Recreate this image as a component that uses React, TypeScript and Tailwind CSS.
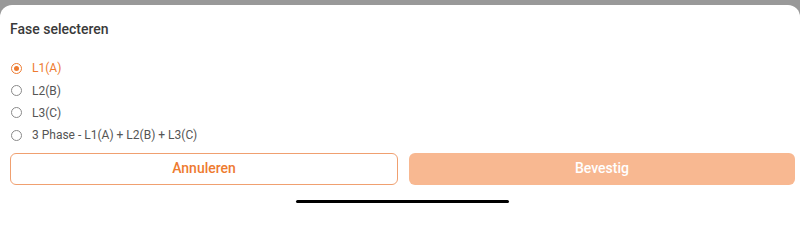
import { useState } from "react";

const phases = ["L1(A)", "L2(B)", "L3(C)", "3 Phase - L1(A) + L2(B) + L3(C)"];

function Radio({ checked }: { checked: boolean }) {
  return (
    <span
      className={`flex h-[11px] w-[11px] items-center justify-center rounded-full border ${
        checked ? "border-[#ee7b30]" : "border-[#8a8a8a]"
      }`}
    >
      {checked && <span className="h-[5px] w-[5px] rounded-full bg-[#ee7b30]" />}
    </span>
  );
}

export default function App() {
  const [selected, setSelected] = useState(0);

  return (
    <div className="flex h-[209px] w-full flex-col overflow-hidden bg-[#999999] font-['Roboto',sans-serif]">
      <div className="h-[5px] shrink-0" />
      <div className="flex flex-1 flex-col rounded-t-[12px] bg-white pr-[5px] pl-[10px]">
        <h1 className="pt-[14px] text-[14px] leading-[20px] font-medium text-[#3a3a3a]">Fase selecteren</h1>

        <div className="mt-[18px] flex flex-col">
          {phases.map((p, i) => (
            <button
              key={p}
              onClick={() => setSelected(i)}
              className="flex h-[22.4px] items-center gap-[10px] pl-[1px] text-left"
            >
              <Radio checked={selected === i} />
              <span className={`text-[12px] ${selected === i ? "text-[#ee7b30]" : "text-[#555555]"}`}>{p}</span>
            </button>
          ))}
        </div>

        <div className="mt-[6px] flex gap-[11px]">
          <button className="h-[32px] flex-1 rounded-[6px] border border-[#f0a070] text-[14px] font-medium text-[#ee7b30]">
            Annuleren
          </button>
          <button className="h-[32px] flex-1 rounded-[6px] bg-[#f8b891] text-[14px] font-medium text-white">
            Bevestig
          </button>
        </div>

        <div className="mt-[15px] flex justify-center">
          <div className="h-[3px] w-[213px] rounded-full bg-black" />
        </div>
      </div>
    </div>
  );
}
